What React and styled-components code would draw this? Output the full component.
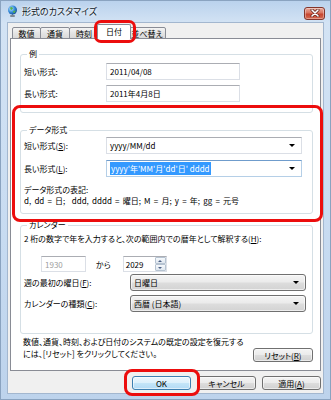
import React from 'react';
import styled, { createGlobalStyle } from 'styled-components';

const GlobalStyle = createGlobalStyle`
  html, body {
    margin: 0;
    padding: 0;
    background: #fff;
  }

  body {
    font-family: "Noto Sans CJK JP", "Noto Sans", sans-serif;
    font-size: 8px;
    line-height: 11px;
    color: #000;
    font-feature-settings: "palt";
  }

  * {
    box-sizing: border-box;
  }
`;

const Window = styled.div`
  width: 331px;
  height: 400px;
  display: flex;
  flex-direction: column;
  padding: 0 6px 5px 6px;
  border: 1px solid #8aa3c0;
  background: linear-gradient(#bad2ed, #d3e3f4 22px, #c7dbf1 60%, #bdd3ec);
`;

const TitleBar = styled.div`
  height: 21px;
  display: flex;
  align-items: center;
  gap: 4px;
`;

const Title = styled.span`
  font-size: 9px;
  line-height: 12px;
  color: #0a1626;
  text-shadow: 0 0 4px #ffffff, 0 0 2px #ffffff;
`;

const CloseButton = styled.div`
  margin-left: auto;
  margin-right: -1px;
  margin-top: 3px;
  width: 21px;
  height: 13px;
  display: flex;
  align-items: center;
  justify-content: center;
  border: 1px solid #83352b;
  border-radius: 3px;
  background: linear-gradient(#e9a99b, #d8735f 45%, #c6442e 55%, #d46a52);
  box-shadow: inset 0 0 0 1px rgba(255, 255, 255, 0.35);
`;

const Client = styled.div`
  flex: 1;
  display: flex;
  flex-direction: column;
  padding: 0 2px;
  background: #f0f0f0;
  border: 1px solid #a3b7cf;
`;

const TabRow = styled.div`
  height: 16px;
  display: flex;
  align-items: flex-end;
  padding: 1px 0 0 2px;
  margin-bottom: -1px;
  position: relative;
  z-index: 1;
`;

const Tab = styled.div`
  width: ${(p) => p.$w}px;
  height: ${(p) => (p.$active ? 15 : 12)}px;
  margin-left: ${(p) => (p.$active ? -2 : p.$first ? 0 : -1)}px;
  margin-right: ${(p) => (p.$active ? -2 : 0)}px;
  display: flex;
  align-items: center;
  justify-content: center;
  padding-bottom: ${(p) => (p.$active ? 2 : 0)}px;
  border: 1px solid #898c95;
  border-bottom: ${(p) => (p.$active ? 'none' : '1px solid #898c95')};
  border-radius: 2px 2px 0 0;
  background: ${(p) => (p.$active ? '#fff' : 'linear-gradient(#f4f4f4, #e4e4e4 50%, #d9d9d9)')};
  position: relative;
  z-index: ${(p) => (p.$active ? 2 : 0)};
  white-space: nowrap;
`;

const Ring = styled.div`
  position: relative;
  display: ${(p) => (p.$inline ? 'inline-flex' : 'block')};
  z-index: 3;

  &::after {
    content: '';
    position: absolute;
    inset: ${(p) => p.$inset};
    border: 3px solid #ec0d0d;
    border-radius: ${(p) => p.$radius || 8}px;
    pointer-events: none;
  }
`;

const Panel = styled.div`
  flex: 1;
  display: flex;
  flex-direction: column;
  padding: 0 7px 0 9px;
  background: #fff;
  border: 1px solid #898c95;
`;

const Group = styled.fieldset`
  margin: ${(p) => p.$mt}px 0 0 0;
  padding: ${(p) => p.$pt}px 3px ${(p) => p.$pb}px 3px;
  border: 1px solid #d5dfe5;
  border-radius: 3px;
  min-width: 0;
`;

const Legend = styled.legend`
  margin-left: 3px;
  padding: 0 2px;
  font-size: 8px;
  line-height: 10px;
`;

const FieldRow = styled.div`
  display: grid;
  grid-template-columns: ${(p) => p.$label}px auto;
  align-items: center;
  margin-top: ${(p) => p.$mt || 0}px;
`;

const TextBox = styled.div`
  width: ${(p) => p.$w}px;
  height: ${(p) => p.$h || 17}px;
  display: flex;
  align-items: center;
  padding-left: 3px;
  border: 1px solid ${(p) => (p.$focused ? '#b5cfe7' : '#dbdfe6')};
  border-top-color: ${(p) => (p.$focused ? '#6f9ccc' : '#abadb3')};
  background: #fff;
  color: ${(p) => (p.$disabled ? '#9d9d9d' : '#000')};
  white-space: nowrap;
`;

const Arrow = styled.span`
  margin-left: auto;
  margin-right: 6px;
  width: 0;
  height: 0;
  border-left: 3px solid transparent;
  border-right: 3px solid transparent;
  border-top: 3px solid #000;
`;

const Selected = styled.span`
  background: #3399ff;
  color: #fff;
  padding: 0 1px;
  line-height: 13px;
`;

const DropList = styled.div`
  width: 176px;
  height: 17px;
  display: flex;
  align-items: center;
  padding-left: 3px;
  border: 1px solid #707070;
  border-radius: 3px;
  background: linear-gradient(#f4f4f4, #ebebeb 48%, #dddddd 52%, #d3d3d3);
  box-shadow: inset 0 0 0 1px rgba(255, 255, 255, 0.6);
`;

const Notes = styled.div`
  margin-top: 7px;
`;

const Line = styled.div`
  white-space: nowrap;
  word-spacing: ${(p) => p.$ws || 0}px;
`;

const SpinRow = styled.div`
  display: flex;
  align-items: center;
  margin-top: 12px;
  padding-left: 17px;
`;

const Kara = styled.span`
  margin: 0 12px 0 10px;
`;

const SpinBox = styled.div`
  width: 44px;
  height: 16px;
  display: flex;
  border: 1px solid #dbdfe6;
  border-top-color: #abadb3;
  background: #fff;
`;

const SpinText = styled.div`
  flex: 1;
  display: flex;
  align-items: center;
  padding-left: 2px;
`;

const SpinButtons = styled.div`
  width: 11px;
  display: flex;
  flex-direction: column;
`;

const SpinButton = styled.div`
  flex: 1;
  display: flex;
  align-items: center;
  justify-content: center;
  border: 1px solid #b6c3d1;
  border-radius: 1px;
  background: linear-gradient(#f6f9fc, #dfe7ef);
`;

const TinyArrow = styled.span`
  width: 0;
  height: 0;
  border-left: 2px solid transparent;
  border-right: 2px solid transparent;
  ${(p) => (p.$up ? 'border-bottom: 2px solid #4d6185;' : 'border-top: 2px solid #4d6185;')}
`;

const Footer = styled.div`
  display: flex;
  align-items: flex-start;
  margin-top: 2px;
  padding-left: 3px;
`;

const FooterText = styled.div`
  line-height: 12px;
`;

const Button = styled.div`
  width: ${(p) => p.$w || 59}px;
  height: 14px;
  display: flex;
  align-items: center;
  justify-content: center;
  border: 1px solid ${(p) => (p.$default ? '#3c7fb1' : '#707070')};
  border-radius: 3px;
  background: ${(p) =>
    p.$default
      ? 'linear-gradient(#ecf6fd, #dcf0fc 48%, #c4e5f8 52%, #b1daf5)'
      : 'linear-gradient(#f4f4f4, #ebebeb 48%, #dddddd 52%, #d0d0d0)'};
  box-shadow: inset 0 0 0 1px rgba(255, 255, 255, 0.55);
  white-space: nowrap;
`;

const ResetButton = styled(Button)`
  margin-left: auto;
  margin-top: 12px;
`;

const ButtonRow = styled.div`
  height: 22px;
  display: flex;
  justify-content: flex-end;
  align-items: flex-start;
  gap: 6px;
  padding-top: 5px;
`;

const GlobeIcon = () => (
  <svg width="11" height="13" viewBox="0 0 11 13">
    <defs>
      <radialGradient id="g" cx="35%" cy="35%" r="70%">
        <stop offset="0%" stopColor="#bfe6ff" />
        <stop offset="60%" stopColor="#2f86d6" />
        <stop offset="100%" stopColor="#164f9a" />
      </radialGradient>
    </defs>
    <rect x="3" y="10" width="5" height="2" rx="1" fill="#7d8894" />
    <rect x="5" y="8" width="1" height="3" fill="#7d8894" />
    <circle cx="5.5" cy="5" r="4.5" fill="url(#g)" />
    <path d="M3 2.5 L5 2 L6 3.5 L4.5 5 L3.5 4.5 Z" fill="#55b34a" />
    <path d="M6 6 L8.5 5.5 L8 7.5 L6.5 8 Z" fill="#55b34a" />
  </svg>
);

const CloseIcon = () => (
  <svg width="10" height="8" viewBox="0 0 10 8">
    <path d="M2 1 L8 7 M8 1 L2 7" stroke="#5a1f17" strokeWidth="3" strokeLinecap="round" />
    <path d="M2 1 L8 7 M8 1 L2 7" stroke="#fff" strokeWidth="1.6" strokeLinecap="round" />
  </svg>
);

const tabs = [
  { label: '数値', w: 29 },
  { label: '通貨', w: 30 },
  { label: '時刻', w: 30 },
  { label: '日付', w: 34, active: true },
  { label: '並べ替え', w: 38 },
];

const App = () => {
  return (
    <>
      <GlobalStyle />
      <Window>
        <TitleBar>
          <GlobeIcon />
          <Title>形式のカスタマイズ</Title>
          <CloseButton>
            <CloseIcon />
          </CloseButton>
        </TitleBar>
        <Client>
          <TabRow>
            {tabs.map((t, i) =>
              t.active ? (
                <Ring key={t.label} $inline $inset='-4px -7px -4px -5px' $radius={7}>
                  <Tab $w={t.w} $active>
                    {t.label}
                  </Tab>
                </Ring>
              ) : (
                <Tab key={t.label} $w={t.w} $first={i === 0}>
                  {t.label}
                </Tab>
              )
            )}
          </TabRow>
          <Panel>
            <Group $mt={10} $pt={4} $pb={10}>
              <Legend>例</Legend>
              <FieldRow $label={82}>
                <span>短い形式:</span>
                <TextBox $w={134}>2011/04/08</TextBox>
              </FieldRow>
              <FieldRow $label={82} $mt={5}>
                <span>長い形式:</span>
                <TextBox $w={134}>2011年4月8日</TextBox>
              </FieldRow>
            </Group>

            <Ring $inset='-8px -10px -8px -8px'>
              <Group $mt={12} $pt={2} $pb={7}>
                <Legend>データ形式</Legend>
                <FieldRow $label={82}>
                  <span>
                    短い形式(<u>S</u>):
                  </span>
                  <TextBox $w={196}>
                    yyyy/MM/dd
                    <Arrow />
                  </TextBox>
                </FieldRow>
                <FieldRow $label={82} $mt={6}>
                  <span>
                    長い形式(<u>L</u>):
                  </span>
                  <TextBox $w={196} $focused>
                    <Selected>yyyy'年'MM'月'dd'日' dddd</Selected>
                    <Arrow />
                  </TextBox>
                </FieldRow>
                <Notes>
                  <Line>データ形式の表記:</Line>
                  <Line $ws={1.4}>d, dd = 日;&nbsp; ddd, dddd = 曜日; M = 月; y = 年; gg = 元号</Line>
                </Notes>
              </Group>
            </Ring>

            <Group $mt={6} $pt={3} $pb={21}>
              <Legend>カレンダー</Legend>
              <Line>
                2 桁の数字で年を入力すると、次の範囲内での暦年として解釈する(<u>H</u>):
              </Line>
              <SpinRow>
                <TextBox $w={45} $h={16} $disabled>
                  1930
                </TextBox>
                <Kara>から</Kara>
                <SpinBox>
                  <SpinText>2029</SpinText>
                  <SpinButtons>
                    <SpinButton>
                      <TinyArrow $up />
                    </SpinButton>
                    <SpinButton>
                      <TinyArrow />
                    </SpinButton>
                  </SpinButtons>
                </SpinBox>
              </SpinRow>
              <FieldRow $label={106} $mt={2}>
                <span>
                  週の最初の曜日(<u>F</u>):
                </span>
                <DropList>
                  日曜日
                  <Arrow />
                </DropList>
              </FieldRow>
              <FieldRow $label={106} $mt={4}>
                <span>
                  カレンダーの種類(<u>C</u>):
                </span>
                <DropList>
                  西暦 (日本語)
                  <Arrow />
                </DropList>
              </FieldRow>
            </Group>

            <Footer>
              <FooterText>
                数値、通貨、時刻、および日付のシステムの既定の設定を復元する
                <br />
                には、[リセット] をクリックしてください。
              </FooterText>
              <ResetButton $w={60}>
                リセット(<u>R</u>)
              </ResetButton>
            </Footer>
          </Panel>
          <ButtonRow>
            <Ring $inline $inset='-7px -9px -6px -8px'>
              <Button $default>OK</Button>
            </Ring>
            <Button>キャンセル</Button>
            <Button>
              適用(<u>A</u>)
            </Button>
          </ButtonRow>
        </Client>
      </Window>
    </>
  );
};

export default App;
